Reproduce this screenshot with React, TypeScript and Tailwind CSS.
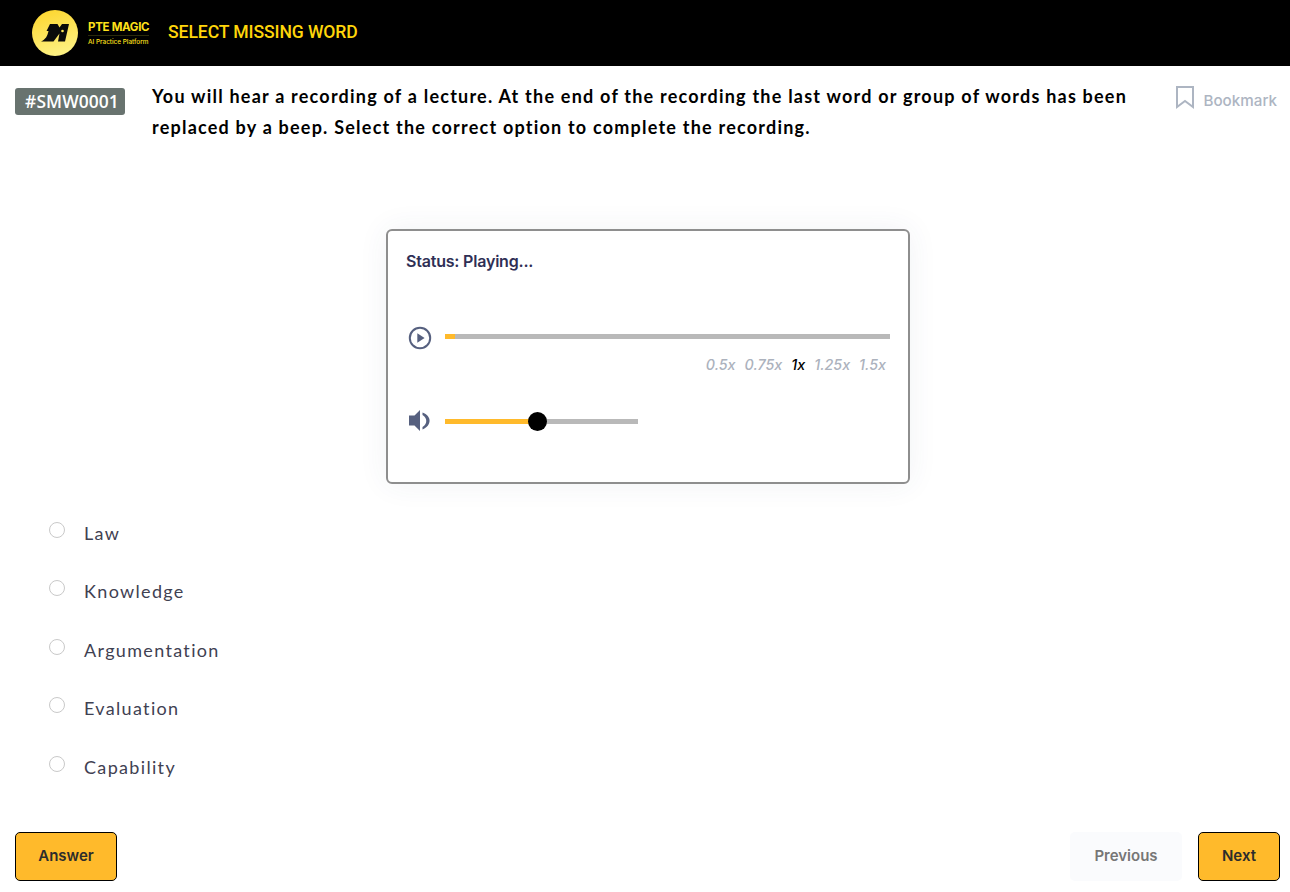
const OPTIONS = ['Law', 'Knowledge', 'Argumentation', 'Evaluation', 'Capability']
const SPEEDS = ['0.5x', '0.75x', '1x', '1.25x', '1.5x']

function Logo() {
  return (
    <svg width="46" height="46" viewBox="0 0 46 46" className="shrink-0">
      <defs>
        <linearGradient id="logoFill" x1="0.2" y1="0" x2="0.5" y2="1">
          <stop offset="0" stopColor="#fdd62e" />
          <stop offset="1" stopColor="#fdf183" />
        </linearGradient>
      </defs>
      <circle cx="23" cy="23" r="23" fill="url(#logoFill)" />
      <path d="M18 14H25.500L27.500 17.500 30 14H37L33 31.500H26L27.500 23.500 21.500 31.500H9C13.500 29.500 15.500 26 16.500 21H14.500z" fill="#0a0a0a" />
      <circle cx="30.500" cy="21" r="1.300" fill="#fde65a" />
    </svg>
  )
}

function PlayIcon() {
  return (
    <svg width="24" height="24" viewBox="0 0 24 24" className="shrink-0 ml-[2px]">
      <circle cx="12" cy="12" r="10.200" fill="none" stroke="#56607f" strokeWidth="2" />
      <path d="M9.300 7.200 16.600 12l-7.300 4.800z" fill="#56607f" />
    </svg>
  )
}

function VolumeIcon() {
  return (
    <svg width="24" height="24" viewBox="0 0 24 24" className="shrink-0 ml-[2px]">
      <path d="M1 6.500h5.500L12 1v21l-5.500-5.500H1z" fill="#56607f" />
      <path d="M14.500 3.500C24 7 24 16.500 14.500 20.500v-2.500C19.500 15 19.500 9 14.500 6z" fill="#56607f" />
    </svg>
  )
}

function BookmarkIcon() {
  return (
    <svg width="18" height="23" viewBox="0 0 18 23" className="shrink-0 mt-[5px]">
      <path d="M1 1h16v20l-8-6-8 6z" fill="none" stroke="#adb5c2" strokeWidth="2" />
    </svg>
  )
}

function AudioCard() {
  return (
    <div className="ml-[386px] w-[524px] h-[255px] border-2 border-[#8e8e8e] rounded-[6px] bg-white pl-[18px] pr-[18px] pt-[19px] shadow-[0_0_30px_rgba(60,70,110,0.07)]">
      <div className="text-[16px] leading-[22px] font-semibold text-[#2f2f55] font-['Inter',sans-serif] tracking-[-0.2px]">
        Status: Playing...
      </div>
      <div className="flex items-center gap-[13px] mt-[54px]">
        <PlayIcon />
        <div className="flex-1 h-[5px] bg-[#b9b9b9] -mt-[3px]">
          <div className="w-[10px] h-full bg-[#ffba2b]" />
        </div>
      </div>
      <div className="flex justify-end gap-[9px] pr-[4px] mt-[5px] text-[14.3px] leading-[20px] italic font-medium font-['Inter',sans-serif] text-[#acb2bd]">
        {SPEEDS.map((s) => (
          <span key={s} className={s === '1x' ? 'text-black' : ''}>
            {s}
          </span>
        ))}
      </div>
      <div className="flex items-center gap-[13px] mt-[34px]">
        <VolumeIcon />
        <div className="relative w-[193px] h-[5px] bg-[#b9b9b9]">
          <div className="w-[92px] h-full bg-[#ffba2b]" />
          <div className="absolute left-[83px] top-[-7px] w-[19px] h-[19px] rounded-full bg-black" />
        </div>
      </div>
    </div>
  )
}

export default function App() {
  return (
    <div className="w-[1290px] h-[892px] bg-white overflow-hidden font-['Lato',sans-serif]">
      <header className="h-[66px] bg-black flex items-center pl-[32px]">
        <Logo />
        <div className="ml-[10px] w-[61px] text-[#ffe11a] font-['Inter',sans-serif]">
          <div className="text-[11.5px] leading-[14px] font-bold tracking-[-0.3px] whitespace-nowrap border-b border-[#2a2a0c] pb-[1px]">
            PTE MAGIC
          </div>
          <div className="text-[6.4px] leading-[10px] font-medium whitespace-nowrap mt-[1px]">AI Practice Platform</div>
        </div>
        <div className="ml-[19px] -mt-[2px] text-[17.6px] font-medium text-[#ffd60a] font-['Roboto',sans-serif] tracking-[-0.1px]">
          SELECT MISSING WORD
        </div>
      </header>

      <section className="flex items-start pl-[15px] pr-[13px] pt-[15px]">
        <span className="mt-[7px] w-[110px] h-[27px] pl-[4px] rounded-[3px] bg-[#68736f] text-white text-[17.4px] leading-[27px] text-center font-semibold font-['Open_Sans',sans-serif] tracking-[0.1px]">
          #SMW0001
        </span>
        <p className="ml-[27px] w-[990px] text-[18px] leading-[31px] font-bold tracking-[1.22px] text-black">
          You will hear a recording of a lecture. At the end of the recording the last word or group of words has been
          replaced by a beep. Select the correct option to complete the recording.
        </p>
        <div className="ml-auto flex items-start gap-[9px]">
          <BookmarkIcon />
          <span className="text-[15.2px] leading-[22px] text-[#adb5c2] font-medium font-['Inter',sans-serif] mt-[9px]">
            Bookmark
          </span>
        </div>
      </section>

      <div className="mt-[86px]">
        <AudioCard />
      </div>

      <div className="mt-[35px] pl-[49px] flex flex-col gap-[36.4px]">
        {OPTIONS.map((o) => (
          <label key={o} className="flex items-start gap-[19px] h-[22px]">
            <span className="w-[16px] h-[16px] mt-[3px] rounded-full border border-[#c9c9c9] bg-white" />
            <span className="text-[18px] leading-[22px] mt-[3px] tracking-[1.33px] text-[#3f4152]">{o}</span>
          </label>
        ))}
      </div>

      <footer className="flex items-center mt-[57px] pl-[15px] pr-[10px] font-['Inter',sans-serif] text-[15px] font-semibold">
        <button className="w-[102px] h-[49px] rounded-[5px] border border-black bg-[#ffba2b] text-[#2c2c2c]">Answer</button>
        <button className="ml-auto w-[112px] h-[49px] rounded-[5px] bg-[#fafbfd] text-[#767676]">Previous</button>
        <button className="ml-[16px] w-[82px] h-[49px] rounded-[5px] border border-black bg-[#ffba2b] text-[#2c2c2c]">Next</button>
      </footer>
    </div>
  )
}
